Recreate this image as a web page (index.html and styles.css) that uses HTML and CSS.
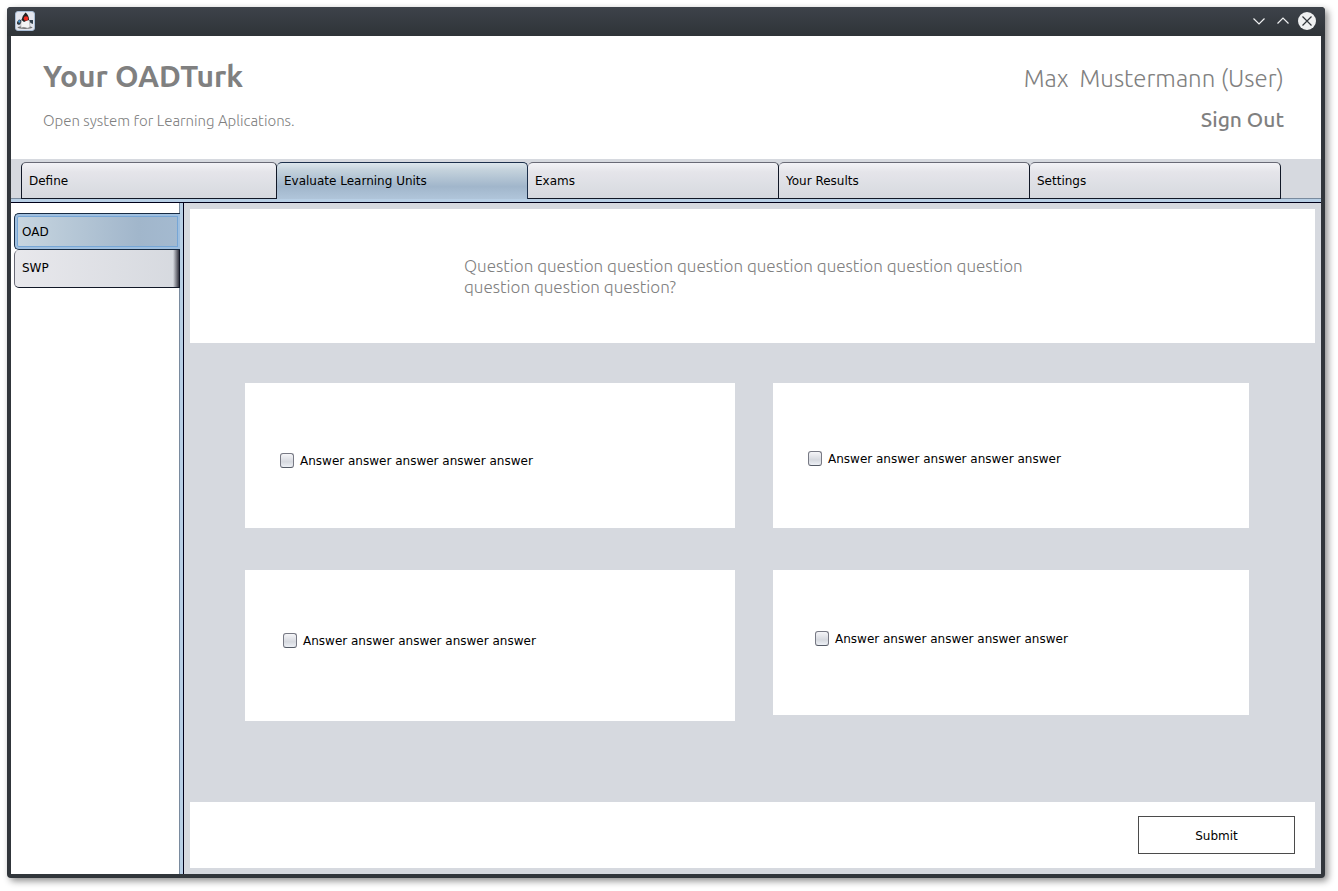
FILE: index.html
```html
<!DOCTYPE html>
<html lang="en">
<head>
<meta charset="utf-8">
<title>OADTurk</title>
<link rel="stylesheet" href="styles.css">
</head>
<body>
<div class="window">
  <div class="titlebar">
    <svg class="app-icon" width="20" height="20" viewBox="0 0 20 20" aria-hidden="true">
      <rect x=".5" y=".5" width="19" height="19" rx="2.5" fill="#e4e6ee" stroke="#a9bdd6"/>
      <ellipse cx="10" cy="16.500" rx="7.500" ry="1.500" fill="#777"/>
      <path d="M2 11L4 8.500L6 9L7 12L4 14L2 13Z" fill="#333c46"/>
      <path d="M3 10L5 9L5.500 11L4 12Z" fill="#4c9bd6"/>
      <path d="M14 9L18 9L18 13L15.500 12Z" fill="#33414d"/>
      <path d="M7 8Q5 13 6 17Q8 16 10 16.500Q13 18 15 16Q15 10 13 7Z" fill="#f5f5f5" stroke="#888" stroke-width=".5"/>
      <path d="M10.500 1.500Q7 5 6.500 9L9 11L12 9.500L14 9Q14 4 10.500 1.500Z" fill="#222"/>
      <circle cx="11" cy="7.500" r="2.300" fill="#f02a20"/>
    </svg>
    <div class="controls">
      <button class="control" aria-label="Minimize"><svg width="18" height="18" viewBox="0 0 18 18"><path d="M3.500 6.500L9 12L14.500 6.500" fill="none" stroke="#eff0f1" stroke-width="1.200"/></svg></button>
      <button class="control" aria-label="Maximize"><svg width="18" height="18" viewBox="0 0 18 18"><path d="M3.500 11.500L9 6L14.500 11.500" fill="none" stroke="#eff0f1" stroke-width="1.200"/></svg></button>
      <button class="control" aria-label="Close"><svg width="18" height="18" viewBox="0 0 18 18"><circle cx="9" cy="9" r="9" fill="#eff0f1"/><path d="M4.500 4.500L13.500 13.500M13.500 4.500L4.500 13.500" stroke="#31363b" stroke-width="1.200"/></svg></button>
    </div>
  </div>
  <header class="header">
    <div>
      <h1 class="brand">Your OADTurk</h1>
      <p class="tagline">Open system for Learning Aplications.</p>
    </div>
    <div class="account">
      <p class="user">Max  Mustermann (User)</p>
      <button class="sign-out">Sign Out</button>
    </div>
  </header>
  <nav class="tabs">
    <button class="tab">Define</button>
    <button class="tab tab-active">Evaluate Learning Units</button>
    <button class="tab">Exams</button>
    <button class="tab">Your Results</button>
    <button class="tab">Settings</button>
  </nav>
  <div class="rule"></div>
  <div class="body">
    <nav class="side">
      <button class="unit unit-active">OAD</button>
      <button class="unit">SWP</button>
    </nav>
    <main class="main">
      <section class="question">
        <p class="question-text">Question question question question question question question question question question question?</p>
      </section>
      <form class="answers">
        <label class="answer"><input class="check" type="checkbox">Answer answer answer answer answer</label>
        <label class="answer answer-b"><input class="check" type="checkbox">Answer answer answer answer answer</label>
        <label class="answer answer-c"><input class="check" type="checkbox">Answer answer answer answer answer</label>
        <label class="answer answer-d"><input class="check" type="checkbox">Answer answer answer answer answer</label>
      </form>
      <footer class="footer"><button class="submit">Submit</button></footer>
    </main>
  </div>
</div>
</body>
</html>
```
FILE: styles.css
```css
* { box-sizing: border-box; }
body {
  margin: 0;
  padding: 7px 13px 13px 7px;
  background: #fff;
  color: #000;
  font: 12px/16px "DejaVu Sans", sans-serif;
}
button { margin: 0; padding: 0; border: 0; background: none; color: inherit; font: inherit; }
h1, p { margin: 0; }
.window {
  display: flex;
  flex-direction: column;
  min-height: calc(100vh - 20px);
  padding: 0 4px 4px;
  border-radius: 4px;
  background: #31363b;
  box-shadow: 3px 3px 7px rgba(0, 0, 0, .45);
}
.titlebar {
  display: flex;
  align-items: center;
  justify-content: space-between;
  height: 29px;
  margin: 0 -4px;
  padding: 0 9px 2px 8px;
  border-radius: 4px 4px 0 0;
  background: linear-gradient(#3d424a, #2f3438);
}
.controls { display: flex; gap: 6px; }
.control { height: 18px; }
.control svg { display: block; }
.header {
  display: flex;
  justify-content: space-between;
  height: 123px;
  padding: 20px 37px 0 32px;
  background: #fff;
  color: #808080;
  font-family: Ubuntu, "Noto Sans", sans-serif;
}
.brand { font-size: 30px; line-height: 40px; font-weight: 600; }
.tagline { margin-top: 15px; font-size: 15px; line-height: 20px; font-weight: 300; }
.account { text-align: right; }
.user { font-size: 24px; line-height: 46px; font-weight: 200; white-space: pre; }
.sign-out { margin-top: 4px; font-size: 21px; line-height: 26px; font-weight: 500; }
.tabs {
  display: grid;
  grid-template-columns: 256fr 251fr 251fr 251fr 251fr;
  padding: 3px 40px 0 10px;
  background: linear-gradient(#7a8b9e, #7a8b9e) bottom / 100% 1px no-repeat #d6d9df;
}
.tab {
  height: 37px;
  padding: 0 7px;
  border: 1px solid #111827;
  border-top-color: #696a76;
  border-left-width: 0;
  border-radius: 5px 5px 0 0;
  background: linear-gradient(#f3f3f7, #e5e5ea 25%, #d6d9df);
  text-align: left;
}
.tab:first-child { border-left-width: 1px; }
.tab-active {
  border-color: #1b2f4b;
  border-bottom: 0;
  padding-bottom: 1px;
  background: linear-gradient(#dce6ec, #c4d2dc 20%, #a1b6cb 65%, #b0c5da);
}
.rule { height: 4px; border-bottom: 1px solid #00001a; background: #b8cfe5; }
.body { display: flex; flex: 1; }
.side {
  width: 173px;
  padding: 10px 0 0 3px;
  border-right: 1px solid #00001a;
  background: linear-gradient(90deg, #7a8b9e 1px, #b8cfe5 1px) right / 4px 100% no-repeat #fff;
}
.unit {
  display: block;
  width: 166px;
  height: 38px;
  padding: 0 7px 1px;
  border: 1px solid #111827;
  border-top: 0;
  border-left-color: #696a76;
  border-radius: 5px 0 0 5px;
  background: linear-gradient(90deg, transparent 158px, #34343f), linear-gradient(90deg, #e8e8ec, #d6d9df);
  text-align: left;
}
.unit-active {
  height: 37px;
  padding-bottom: 0;
  border: 1px solid #172b43;
  border-right: 0;
  background: linear-gradient(90deg, #c8d6e0, #a1b6cb 75%, #a4bad0);
  box-shadow: inset 0 0 0 2px #9fbfdf, inset 0 0 0 3px #76a6d6;
}
.main {
  display: flex;
  flex: 1;
  flex-direction: column;
  padding: 6px;
  background: #d6d9df;
}
.question { height: 134px; padding: 46px 274px 0; background: #fff; }
.question-text {
  color: #808080;
  font: 300 17px/21px Ubuntu, "Noto Sans", sans-serif;
}
.answers {
  display: grid;
  flex: 1;
  grid-template-columns: 490fr 476fr;
  align-content: start;
  align-items: start;
  gap: 42px 38px;
  padding: 40px 66px 40px 55px;
}
.answer {
  display: flex;
  align-items: center;
  gap: 6px;
  height: 145px;
  padding: 10px 35px 0;
  background: #fff;
}
.answer-b { padding-top: 6px; }
.answer-c { height: 151px; padding: 0 38px 10px; }
.answer-d { padding: 0 42px 8px; }
.check {
  width: 14px;
  height: 15px;
  margin: 0;
  appearance: none;
  border: 1px solid #777984;
  border-bottom-color: #555b66;
  border-radius: 3px;
  background: linear-gradient(#f5f5f8, #d6d9df 60%, #edf0f5);
}
.check:checked { background: #5b87b2; }
.footer {
  display: flex;
  justify-content: flex-end;
  height: 66px;
  padding: 14px 20px;
  background: #fff;
}
.submit { width: 157px; padding-top: 2px; border: 1px solid #4b4b4b; }
```
